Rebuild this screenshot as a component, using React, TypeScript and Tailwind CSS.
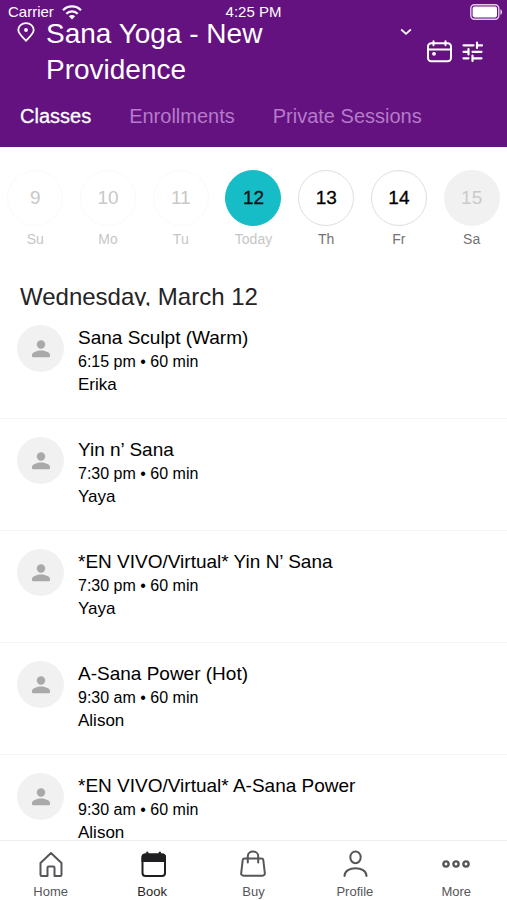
import React from "react";

type Day = { num: number; label: string; state: "past" | "today" | "open" | "closed" };
type Session = { title: string; time: string; teacher: string };

const days: Day[] = [
  { num: 9, label: "Su", state: "past" },
  { num: 10, label: "Mo", state: "past" },
  { num: 11, label: "Tu", state: "past" },
  { num: 12, label: "Today", state: "today" },
  { num: 13, label: "Th", state: "open" },
  { num: 14, label: "Fr", state: "open" },
  { num: 15, label: "Sa", state: "closed" },
];

const circleStyles = {
  past: "border-[#fafafa] text-[#c8c8c8]",
  today: "border-[#16bdc7] bg-[#16bdc7] text-[#10191a]",
  open: "border-[#dedede] text-black",
  closed: "border-[#f1f1f1] bg-[#f1f1f1] text-[#cacaca]",
};

const labelStyles = {
  past: "text-[#c6c6c6]",
  today: "text-[#c6c6c6]",
  open: "text-[#727272]",
  closed: "text-[#727272]",
};

const sessions: Session[] = [
  { title: "Sana Sculpt (Warm)", time: "6:15 pm • 60 min", teacher: "Erika" },
  { title: "Yin n’ Sana", time: "7:30 pm • 60 min", teacher: "Yaya" },
  { title: "*EN VIVO/Virtual* Yin N’ Sana", time: "7:30 pm • 60 min", teacher: "Yaya" },
  { title: "A-Sana Power (Hot)", time: "9:30 am • 60 min", teacher: "Alison" },
  { title: "*EN VIVO/Virtual* A-Sana Power", time: "9:30 am • 60 min", teacher: "Alison" },
];

function StatusBar() {
  return (
    <div className="flex h-6 items-center justify-between px-2 text-[15px] leading-6">
      <div className="flex flex-1 items-center gap-2">
        <span>Carrier</span>
        <svg className="h-[15px] w-5" viewBox="0 0 20 15" fill="none" stroke="white" strokeWidth="2.2" aria-hidden="true">
          <path d="M1 5.2C6 .2 14 .2 19 5.2" />
          <path d="M4.3 8.7c3.3-3.2 8.1-3.2 11.4 0" />
          <path d="M6.9 11.3 10 14.5l3.1-3.2c-1.8-1.6-4.4-1.6-6.2 0Z" fill="white" stroke="none" />
        </svg>
      </div>
      <span>4:25 PM</span>
      <div className="flex flex-1 justify-end">
        <svg className="-mr-1 h-4 w-[33px]" viewBox="0 0 33 16" aria-hidden="true">
          <rect x="0.8" y="0.8" width="28" height="14.4" rx="3.6" fill="none" stroke="#e3cdec" strokeWidth="1.4" />
          <rect x="2.6" y="2.6" width="24.4" height="10.8" rx="1.8" fill="white" />
          <path d="M30.4 5.2c2.2.8 2.2 4.8 0 5.6Z" fill="#e3cdec" />
        </svg>
      </div>
    </div>
  );
}

function Header() {
  return (
    <header className="bg-[#64127f] text-white">
      <StatusBar />
      <div className="-mt-2 flex items-start pr-6 pl-[17px]">
        <h1 className="flex-1">
          <button type="button" className="flex w-full items-start text-left text-[28px] leading-9">
            <svg className="mt-[6px] mr-[11px] h-5 w-[18px] shrink-0" viewBox="0 0 18 20" fill="none" stroke="white" strokeWidth="1.8" strokeLinejoin="round" aria-hidden="true">
              <path d="M9 18.8C5.200 15 1.300 11.300 1.300 8a7.700 6.900 0 0 1 15.400 0c0 3.300-3.900 7-7.700 10.800Z" />
              <circle cx="9" cy="8" r="1.900" fill="white" stroke="none" />
            </svg>
            <span className="flex-1">Sana Yoga - New Providence</span>
            <svg className="mt-3 h-[8px] w-3 shrink-0" viewBox="0 0 12 8" fill="none" stroke="white" strokeWidth="1.7" aria-hidden="true">
              <path d="M1.200 1.500 6 5.900l4.800-4.400" />
            </svg>
          </button>
        </h1>
        <button type="button" aria-label="Pick a date" className="mt-6 ml-[14px]">
          <svg className="h-[23px] w-[27px]" viewBox="0 0 27 23" fill="none" stroke="white" strokeWidth="2" strokeLinecap="round" aria-hidden="true">
            <rect x="2" y="3.200" width="23" height="18" rx="3.200" />
            <path d="M2 9.500h23M7.500 1.200v4M19.500 1.200v4" />
            <circle cx="8" cy="13.800" r="1.900" fill="white" stroke="none" />
          </svg>
        </button>
        <button type="button" aria-label="Filters" className="mt-[25px] ml-[9px]">
          <svg className="h-[21px] w-[21px]" viewBox="0 0 21 21" fill="none" stroke="white" strokeWidth="2.200" strokeLinecap="round" aria-hidden="true">
            <path d="M1.500 4.300h10M15 1.500v5.400M15 4.300h5M1.500 10.800h5M6.500 8.200v5.300M10.500 10.800h9M1.500 17.300h5M10.500 14.700v5.200M10.500 17.300h9" />
          </svg>
        </button>
      </div>
      <nav className="flex gap-[38px] px-5 pt-4 pb-[19px] text-xl leading-6" aria-label="Booking types">
        <button type="button" className="[-webkit-text-stroke:0.3px_white]">Classes</button>
        <button type="button" className="text-[#b57acb]">Enrollments</button>
        <button type="button" className="text-[#b57acb]">Private Sessions</button>
      </nav>
    </header>
  );
}

function DayStrip() {
  return (
    <div className="-mx-px grid grid-cols-7 pt-[23px]">
      {days.map((d) => (
        <button key={d.num} type="button" className="flex flex-col items-center">
          <span className={`flex size-14 items-center justify-center rounded-full border text-[19px] leading-6 ${circleStyles[d.state]} ${d.state === "past" || d.state === "closed" ? "" : "[-webkit-text-stroke:0.3px_black]"}`}>
            {d.num}
          </span>
          <span className={`mt-[3px] text-[14px] leading-5 ${labelStyles[d.state]}`}>{d.label}</span>
        </button>
      ))}
    </div>
  );
}

function SessionRow({ session }: { session: Session }) {
  return (
    <li className="border-b border-[#f3f3f3]">
      <button type="button" className="flex w-full items-start gap-[14px] px-[17px] pt-[18px] pb-[22px] text-left text-black">
        <span className="flex size-[47px] shrink-0 items-center justify-center rounded-full bg-[#f1f1f1]">
          <svg className="h-[18px] w-[18px]" viewBox="0 0 18 18" fill="#a9a9a9" aria-hidden="true">
            <circle cx="9" cy="4.500" r="4.200" />
            <path d="M0 16v-1c0-3 5.500-4.500 9-4.500s9 1.500 9 4.500v1c0 .8-.6 1.300-1.300 1.300H1.300C.6 17.300 0 16.800 0 16Z" />
          </svg>
        </span>
        <span className="flex flex-col pt-px">
          <span className="text-[19px] leading-6">{session.title}</span>
          <span className="text-[16px] leading-6">{session.time}</span>
          <span className="text-[17px] leading-[22px]">{session.teacher}</span>
        </span>
      </button>
    </li>
  );
}

const stroke = {
  fill: "none",
  stroke: "currentColor",
  strokeWidth: 2,
  strokeLinejoin: "round" as const,
  strokeLinecap: "round" as const,
};

const navItems = [
  {
    label: "Home",
    icon: (
      <g {...stroke}>
        <path d="M3.500 13 14 3l10.500 10v11.700c0 .8-.6 1.300-1.300 1.300h-5.700v-8.300c0-.7-.5-1.200-1.200-1.200h-4.600c-.7 0-1.200.5-1.200 1.200v8.300H4.800c-.7 0-1.300-.5-1.300-1.300Z" />
      </g>
    ),
  },
  {
    label: "Book",
    icon: (
      <g>
        <rect x="4.500" y="4.500" width="22.500" height="21.500" rx="3" fill="none" stroke="currentColor" strokeWidth="2" />
        <path d="M3.500 12V7c0-2 1.500-3.500 3.500-3.500h1.200V1.800h2.200v1.700h10.300V1.800h2.200v1.700H24.500C26.500 3.500 28 5 28 7v5Z" fill="currentColor" />
      </g>
    ),
  },
  {
    label: "Buy",
    icon: (
      <g {...stroke}>
        <path d="M5.500 8.500h17c1 0 1.700.6 1.800 1.500l1.500 13c.2 1.600-.8 2.700-2.300 2.700h-19c-1.500 0-2.500-1.100-2.300-2.700l1.500-13c.1-.9.800-1.500 1.800-1.500Z" />
        <path d="M8.800 12.500V6.200c0-6.200 10.400-6.200 10.400 0v6.300" />
      </g>
    ),
  },
  {
    label: "Profile",
    icon: (
      <g {...stroke}>
        <ellipse cx="14.500" cy="7.300" rx="5.200" ry="5.900" />
        <path d="M3.500 26c0-10.500 22-10.500 22 0" />
      </g>
    ),
  },
  {
    label: "More",
    icon: (
      <g {...stroke} strokeWidth={2.4}>
        <circle cx="4" cy="14" r="2.600" />
        <circle cx="14" cy="14" r="2.600" />
        <circle cx="24" cy="14" r="2.600" />
      </g>
    ),
  },
];

function BottomNav() {
  return (
    <nav className="grid h-[60px] shrink-0 grid-cols-5 border-t border-[#eeeeee] bg-white" aria-label="Main">
      {navItems.map((item) => (
        <a
          key={item.label}
          href={`#${item.label.toLowerCase()}`}
          className={`flex flex-col items-center pt-[9px] text-[13px] leading-4 ${item.label === "Book" ? "text-[#1f1f22]" : "text-[#56565a]"}`}
        >
          <svg className="size-7" viewBox="0 0 28 28" aria-hidden="true">{item.icon}</svg>
          <span className="mt-[6px]">{item.label}</span>
        </a>
      ))}
    </nav>
  );
}

export default function App() {
  return (
    <div className="flex h-screen flex-col overflow-hidden bg-white font-['Liberation_Sans',Arial,sans-serif]">
      <Header />
      <main className="min-h-0 flex-1 overflow-hidden">
        <DayStrip />
        {/* The heading's box ends just under the baseline, so descenders are trimmed */}
        <h2 className="mt-[34px] mb-px h-[23px] overflow-hidden px-5 text-2xl leading-[27px] text-[#242426]">
          Wednesday, March 12
        </h2>
        <ul>
          {sessions.map((s, i) => (
            <SessionRow key={i} session={s} />
          ))}
        </ul>
      </main>
      <BottomNav />
    </div>
  );
}
